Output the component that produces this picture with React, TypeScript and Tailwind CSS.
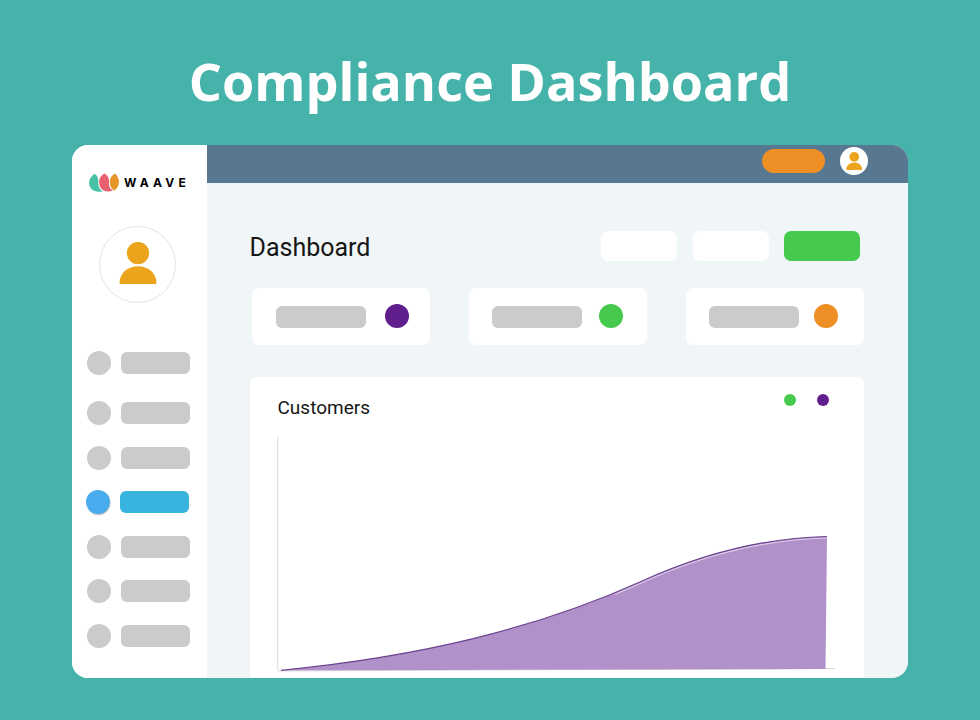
const menu = [
  { top: "mt-[48px]", active: false },
  { top: "mt-[26px]", active: false },
  { top: "mt-[21px]", active: false },
  { top: "mt-[20px]", active: true },
  { top: "mt-[21px]", active: false },
  { top: "mt-[20px]", active: false },
  { top: "mt-[21px]", active: false },
];

const stats = [
  { dot: "bg-[#611f8d]", gap: "ml-[18.5px]", pad: "pl-[24px]" },
  { dot: "bg-[#45ca4d]", gap: "ml-[17px]", pad: "pl-[23px]" },
  { dot: "bg-[#ee8f26]", gap: "ml-[15.5px]", pad: "pl-[22.5px]" },
];

function Person({ className }: { className: string }) {
  return (
    <svg className={className} viewBox="0 0 38 43" fill="#eca41c">
      <circle cx="19" cy="11.3" r="11.3" />
      <path d="M0.4 42.4V40.5C1 31 9 24.6 19 24.6S37 31 37.6 40.5V42.4Z" />
    </svg>
  );
}

function Logo() {
  return (
    <div className="mt-[28px] ml-[17px] flex h-[20px] items-center">
      <svg className="h-[20px] w-[31px] shrink-0" viewBox="0 0 31 20">
        <path d="M5.700 0.800C2 3.500 0 6.500 0 10C0.300 15.500 4.500 20 13.700 18.400C10.500 16.500 9.300 13.500 9.300 10.300C9.200 8 9.500 6 8.700 4.300C8 2.800 7 1.700 5.700 0.800Z" fill="#49c1a6" />
        <path d="M15.300 0.500C12 2.600 10.300 5 10.100 8.500C10 15.500 14.500 20.300 24 17.800C21.300 16 20 14 20 11.300C20 9 20.500 7 19.400 4.700C18.500 2.900 17.200 1.600 15.300 0.500Z" fill="#e9616e" />
        <path d="M26 0.500C22.500 2.700 20.800 5.300 20.800 8.500C20.700 12.500 22.200 15.500 25 17.600C28.300 15.500 30 12.300 30 8.700C29.800 5.300 28.500 2.700 26 0.500Z" fill="#e69529" />
      </svg>
      <span className="ml-[4px] font-['Inter',sans-serif] text-[12px] leading-none font-bold tracking-[4.200px] text-black">WAAVE</span>
    </div>
  );
}

export default function App() {
  return (
    <div className="flex h-[720px] w-[980px] flex-col items-center overflow-hidden bg-[#46b3aa]">
      <h1 className="mt-[45px] h-[100px] font-['Open_Sans',sans-serif] text-[52.200px] leading-[72px] font-bold whitespace-nowrap text-white">
        Compliance Dashboard
      </h1>
      <div className="flex h-[532.5px] w-[836px] shrink-0 overflow-hidden rounded-[16px] bg-[#f0f5f7]">
        <aside className="flex w-[134.5px] shrink-0 flex-col bg-white">
          <Logo />
          <div className="mt-[33px] ml-[27px] flex h-[77px] w-[77px] shrink-0 justify-center rounded-full border border-[#e2e2e2] pt-[15px]">
            <Person className="h-[42.500px] w-[38px]" />
          </div>
          {menu.map((item, i) => (
            <div key={i} className={`flex shrink-0 items-center ${item.top} ${item.active ? "ml-[14px]" : "ml-[15px]"}`}>
              <span className={`size-[24px] rounded-full ${item.active ? "bg-[#48acef] shadow-[0.5px_1px_1px_#bbbbbb]" : "bg-[#cbcbcb]"}`} />
              <span className={`ml-[10px] h-[21.500px] w-[69px] rounded-[6px] ${item.active ? "bg-[#37b4dd]" : "bg-[#cbcbcb]"}`} />
            </div>
          ))}
        </aside>
        <main className="flex min-w-0 flex-1 flex-col">
          <header className="flex h-[37.500px] shrink-0 justify-end bg-[#577890] pr-[40.500px]">
            <span className="mt-[4px] h-[24px] w-[63px] rounded-full bg-[#ee8f26]" />
            <span className="mt-[2px] ml-[15px] flex size-[27.500px] justify-center rounded-full bg-white pt-[4.500px]">
              <Person className="h-[18.500px] w-[16.500px]" />
            </span>
          </header>
          <div className="mt-[48px] ml-[43px] flex h-[31px] shrink-0">
            <h2 className="mt-px w-[351.500px] font-['Roboto',sans-serif] text-[25px] leading-[32px] whitespace-nowrap text-[#161616]">Dashboard</h2>
            <span className="h-[30px] w-[76px] rounded-[7px] bg-white" />
            <span className="mt-[0.500px] ml-[15.500px] h-[30px] w-[76px] rounded-[7px] bg-white" />
            <span className="mt-[0.500px] ml-[15px] h-[30px] w-[76px] rounded-[7px] bg-[#45ca4d]" />
          </div>
          <div className="mt-[26px] ml-[45.500px] flex shrink-0 gap-[39px]">
            {stats.map((s, i) => (
              <div key={i} className={`flex h-[57.500px] w-[178px] items-center rounded-[7px] bg-white ${s.pad}`}>
                <span className="mt-px h-[22px] w-[90px] rounded-[6px] bg-[#cbcbcb]" />
                <span className={`size-[24px] rounded-full ${s.gap} ${s.dot}`} />
              </div>
            ))}
          </div>
          <section className="mt-[31.500px] ml-[43px] flex w-[614.500px] flex-1 flex-col rounded-t-[7px] bg-white">
            <div className="flex h-[55px] shrink-0 pl-[28px]">
              <h3 className="mt-[18px] w-[506px] font-['Roboto',sans-serif] text-[19px] leading-[26px] whitespace-nowrap text-[#161616]">Customers</h3>
              <span className="mt-[17px] size-[12px] rounded-full bg-[#45ca4d]" />
              <span className="mt-[17px] ml-[21px] size-[12px] rounded-full bg-[#611f8d]" />
            </div>
            <svg className="ml-[20.500px] h-[246px] w-[580px] shrink-0" viewBox="270 432 580 246" fill="none">
              <path d="M277.700 437V670.500M277.700 671L835 668.500" stroke="#dadada" strokeWidth="1" />
              <path d="M281 670.500C420 656.500 535 629 640 582C700 554.500 760 538 827 536.500L825.500 669L281 670.500Z" fill="#b191c9" />
              <path d="M615 594.500L640 583.500C700 556 760 539.500 827 538" stroke="#dccbe6" strokeWidth="1.200" />
              <path d="M281 670.300C420 656.500 535 629 640 582C700 554.500 760 538 827 536.500" stroke="#6b4390" strokeWidth="1.200" />
            </svg>
          </section>
        </main>
      </div>
    </div>
  );
}
